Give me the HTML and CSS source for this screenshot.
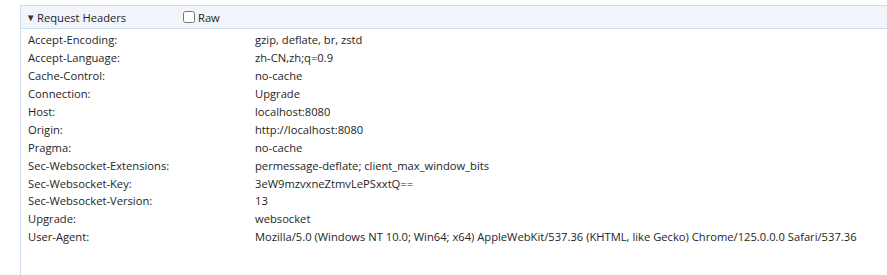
FILE: index.html
```html
<!DOCTYPE html>
<html>
<head>
    <meta charset="UTF-8">
    <title>Request Headers</title>
    <link rel="stylesheet" href="styles.css">
</head>
<body>
    <div class="panel">
        <div class="section-header">
            <span class="toggle">&#9660;</span>
            <span class="title">Request Headers</span>
            <label class="raw"><input type="checkbox"> Raw</label>
        </div>
        <div class="rows">
            <div class="row"><span class="name">Accept-Encoding:</span><span class="value">gzip, deflate, br, zstd</span></div>
            <div class="row"><span class="name">Accept-Language:</span><span class="value">zh-CN,zh;q=0.9</span></div>
            <div class="row"><span class="name">Cache-Control:</span><span class="value">no-cache</span></div>
            <div class="row"><span class="name">Connection:</span><span class="value">Upgrade</span></div>
            <div class="row"><span class="name">Host:</span><span class="value">localhost:8080</span></div>
            <div class="row"><span class="name">Origin:</span><span class="value">http://localhost:8080</span></div>
            <div class="row"><span class="name">Pragma:</span><span class="value">no-cache</span></div>
            <div class="row"><span class="name">Sec-Websocket-Extensions:</span><span class="value">permessage-deflate; client_max_window_bits</span></div>
            <div class="row"><span class="name">Sec-Websocket-Key:</span><span class="value">3eW9mzvxneZtmvLePSxxtQ==</span></div>
            <div class="row"><span class="name">Sec-Websocket-Version:</span><span class="value">13</span></div>
            <div class="row"><span class="name">Upgrade:</span><span class="value">websocket</span></div>
            <div class="row"><span class="name">User-Agent:</span><span class="value">Mozilla/5.0 (Windows NT 10.0; Win64; x64) AppleWebKit/537.36 (KHTML, like Gecko) Chrome/125.0.0.0 Safari/537.36</span></div>
        </div>
    </div>
</body>
</html>
```

FILE: styles.css
```css
html, body {
    margin: 0;
    height: 100%;
}

body {
    font-family: 'Open Sans', 'Liberation Sans', sans-serif;
    font-size: 11.2px;
    color: #252525;
    background-color: #fff;
    padding: 5px 0 0 20px;
    box-sizing: border-box;
}

.panel {
    border-left: 1px solid #cfdcef;
    border-top: 1px solid #cfdcef;
    height: 100%;
    box-sizing: border-box;
}

.section-header {
    display: flex;
    align-items: center;
    height: 22px;
    background-color: #f1f4f9;
    border-bottom: 1px solid #cfdcef;
    padding-left: 5px;
}

.toggle {
    font-size: 9.5px;
    width: 11px;
    color: #333;
}

.title {
    width: 146px;
}

.raw {
    display: flex;
    align-items: center;
}

.raw input {
    margin: 0 3px 0 0;
    width: 12px;
    height: 12px;
}

.rows {
    padding: 2px 0 0 7px;
}

.row {
    display: flex;
    height: 17.9px;
    align-items: center;
}

.name {
    width: 227px;
    flex-shrink: 0;
}

.value {
    white-space: nowrap;
}
```
